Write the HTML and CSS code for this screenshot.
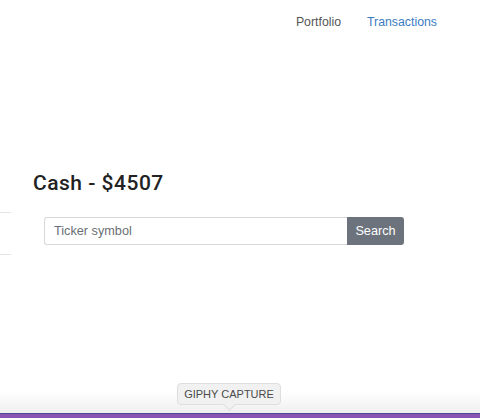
FILE: index.html
```html
<!DOCTYPE html>
<html>
<head>
<meta charset="utf-8">
<link rel="stylesheet" href="styles.css">
</head>
<body>
<div class="page">
  <nav class="nav">
    <a class="nav-link">Portfolio</a>
    <a class="nav-link active">Transactions</a>
  </nav>
  <main class="main">
    <h1 class="cash">Cash - $4507</h1>
    <div class="row">
      <div class="edge"></div>
      <form class="search">
        <input class="input" type="text" placeholder="Ticker symbol">
        <button class="btn" type="button">Search</button>
      </form>
    </div>
  </main>
  <footer class="footer">
    <div class="tip">GIPHY CAPTURE</div>
  </footer>
</div>
</body>
</html>
```
FILE: styles.css
```css
* { box-sizing: border-box; }
html, body { margin: 0; padding: 0; background: #fff; }
body { font-family: "Liberation Sans", Arial, sans-serif; color: #222; }
.page { width: 480px; height: 418px; display: flex; flex-direction: column; overflow: hidden; }
.nav { display: flex; justify-content: flex-end; gap: 26px; padding: 14px 43px 0 0; height: 58px; }
.nav-link { font-size: 12.3px; color: #555; line-height: 17px; }
.nav-link.active { color: #3b7dc4; }
.main { flex: 1; }
.cash { margin: 113px 0 0 33px; font-family: Roboto, "Liberation Sans", sans-serif; font-size: 21px; font-weight: 500; line-height: 24px; color: #222; letter-spacing: 0.5px; }
.row { display: flex; align-items: flex-start; margin-top: 17px; }
.edge { width: 11px; height: 43px; border-top: 1px solid #e4e4e4; border-bottom: 1px solid #e4e4e4; }
.search { display: flex; margin: 5px 0 0 33px; }
.input { width: 303px; height: 28px; border: 1px solid #d6d9dc; border-right: none; border-radius: 3px 0 0 3px; padding: 0 9px; font-family: inherit; font-size: 12.7px; color: #333; outline: none; }
.input::placeholder { color: #6a6f74; }
.btn { width: 57px; height: 28px; border: none; background: #6c737c; color: #fff; font-family: inherit; font-size: 12.7px; border-radius: 0 3px 3px 0; padding: 0; }
.footer { position: relative; height: 26px; background: linear-gradient(#ffffff, #eeeeee); border-bottom: 4px solid #8a55b2; box-shadow: inset 0 -1px 0 #4b4a96; }
.tip { position: absolute; left: 177px; top: -9px; width: 104px; height: 22px; background: #f1f1f1; border: 1px solid #dedede; border-radius: 4px; font-size: 11px; color: #4a4a4a; text-align: center; line-height: 20px; }
.tip::after { content: ""; position: absolute; left: 47px; bottom: -5px; width: 8px; height: 8px; background: #f1f1f1; border-right: 1px solid #dedede; border-bottom: 1px solid #dedede; transform: rotate(45deg); }
```
